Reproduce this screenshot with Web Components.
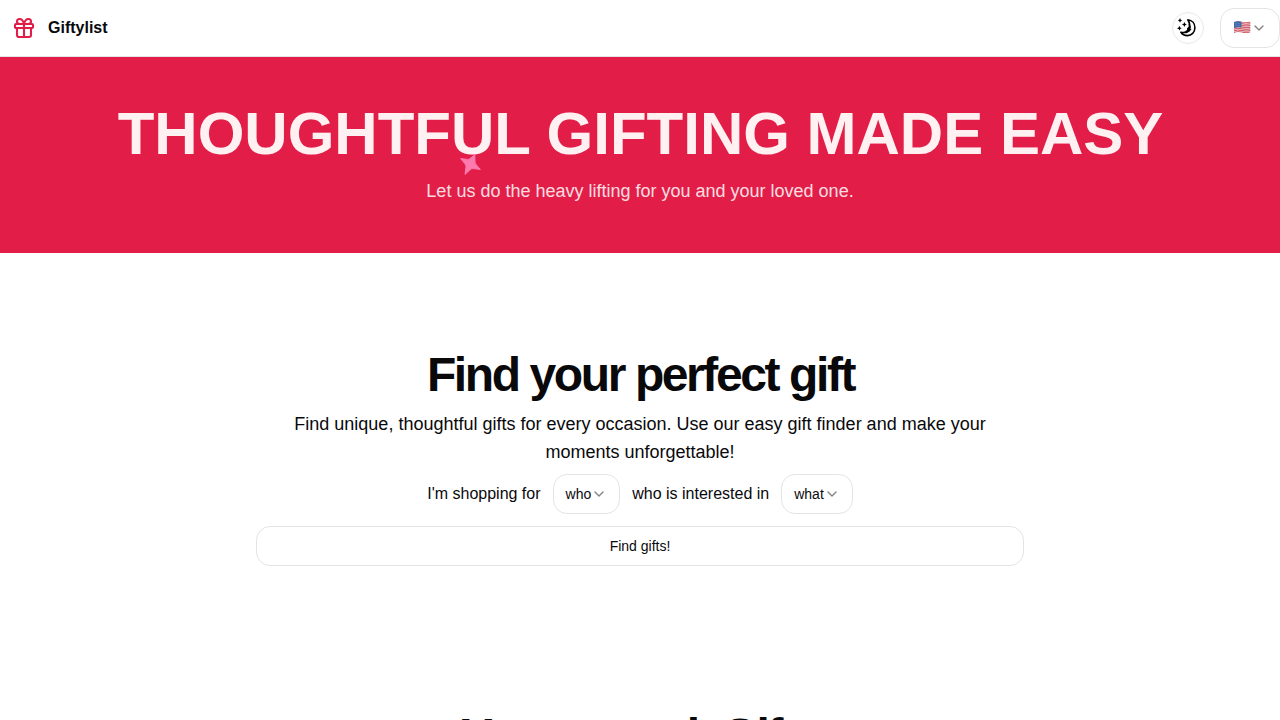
<!DOCTYPE html>
<html lang="en">
<head>
<meta charset="utf-8">
<title>Giftylist</title>
<style>
  body {
    margin: 0;
    height: 720px;
    overflow: hidden;
    background: #fff;
    color: #09090b;
    font-family: "Liberation Sans", Arial, sans-serif;
    font-size: 16px;
    line-height: 24px;
  }
</style>
</head>
<body>
<site-header name="Giftylist"></site-header>
<hero-banner>
  Thoughtful gifting made easy
  <span slot="tagline">Let us do the heavy lifting for you and your loved one.</span>
</hero-banner>
<gift-finder>
  Find your perfect gift
  <span slot="description">Find unique, thoughtful gifts for every occasion. Use our easy gift finder and make your moments unforgettable!</span>
</gift-finder>
<gift-results>Your <em>search</em> Gifts</gift-results>

<script>
class BaseElement extends HTMLElement {
  constructor() {
    super();
    const template = document.createElement('template');
    template.innerHTML = this.constructor.markup;
    this.attachShadow({ mode: 'open' });
    this.shadowRoot.appendChild(template.content.cloneNode(true));
  }
}

class SelectButton extends BaseElement {
  static markup = `
    <style>
      :host { display: block; }
      button {
        display: flex;
        align-items: center;
        box-sizing: border-box;
        height: 40px;
        padding: 0 12px;
        border: 1px solid #e4e4e7;
        border-radius: 14px;
        background: #fff;
        color: inherit;
        font: 14px/20px "Liberation Sans", Arial, sans-serif;
      }
      svg { display: block; opacity: .5; }
    </style>
    <button type="button">
      <slot></slot>
      <svg width="16" height="16" viewBox="0 0 24 24" fill="none" stroke="currentColor" stroke-width="2" stroke-linecap="round" stroke-linejoin="round"><path d="m6 9 6 6 6-6"/></svg>
    </button>
  `;
}

class FlagIcon extends BaseElement {
  static markup = `
    <style>
      :host { display: block; width: 18px; height: 16px; }
      svg { display: block; }
    </style>
    <svg width="18" height="16" viewBox="0 0 18 16">
      <defs>
        <clipPath id="wave"><path d="M1 2Q5 .6 9 1.8T17.3 1.6V12.2Q13 13.8 9 12.6T1 13Z"/></clipPath>
      </defs>
      <g clip-path="url(#wave)">
        <rect width="18" height="16" fill="#e8dade"/>
        <g fill="none" stroke="#d4505c" stroke-width="1">
          <path d="M0 2.5Q5 .8 9 2T18 2M0 4.2Q5 2.5 9 3.7T18 3.7M0 5.9Q5 4.2 9 5.4T18 5.4M0 7.6Q5 5.9 9 7.1T18 7.1M0 9.3Q5 7.6 9 8.8T18 8.8M0 11Q5 9.3 9 10.5T18 10.5M0 12.7Q5 11 9 12.2T18 12.2"/>
        </g>
        <path d="M0 1H8.5V7.6Q5 6.8 0 8.2Z" fill="#3f6aa8"/>
        <path d="M2 3.7H8M2 5.7H8" stroke="#8eaad2" stroke-width=".6" stroke-dasharray=".7 .8"/>
      </g>
    </svg>
  `;
}

class ThemeToggle extends BaseElement {
  static markup = `
    <style>
      :host { display: block; }
      button {
        display: flex;
        align-items: center;
        justify-content: center;
        box-sizing: border-box;
        width: 32px;
        height: 32px;
        padding: 0;
        border: 1px solid #e8e8ea;
        border-radius: 50%;
        background: #fff;
      }
      svg { display: block; margin: -1px 0 0 -2px; }
    </style>
    <button type="button" aria-label="Toggle theme">
      <svg width="22" height="22" viewBox="0 0 22 22">
        <path d="M11.8 2.8C16.2 3.2 18.9 6.6 18.9 10.8C18.9 15.3 15.6 18.6 11.4 18.6C8.6 18.6 6.3 17.3 4.9 15.2C7.6 15.9 10.4 15.2 12 13L11.8 11.7L13.4 10C14 7.3 13.3 4.8 11.8 2.8Z" fill="#fff" stroke="#000" stroke-width="1.6" stroke-linejoin="round"/>
        <path d="M13.6 6.5L15 10.2L14.2 11.5L15.6 12L13.6 14.4L10.6 16.2L7 15.9L10.5 14L12 12.8L11.4 11.5L13 10Z"/>
        <path d="M4 1.1L4.8 2.7L6.3 3.4L4.8 4.1L4 5.7L3.2 4.1L1.7 3.4L3.2 2.7ZM8.4 5.1L9.2 6.8L10.8 7.5L9.2 8.2L8.4 9.9L7.6 8.2L5.9 7.5L7.6 6.8ZM3.4 8.8L4.2 10.5L5.8 11.2L4.2 11.9L3.4 13.5L2.6 11.9L1 11.2L2.6 10.5Z"/>
      </svg>
    </button>
  `;
}

class SiteHeader extends BaseElement {
  static markup = `
    <style>
      :host { display: block; }
      header {
        display: flex;
        align-items: center;
        box-sizing: border-box;
        height: 57px;
        padding-left: 12px;
        border-bottom: 1px solid #e4e4e7;
      }
      .logo { display: block; margin-right: 12px; }
      b { flex: 1; }
      theme-toggle { margin-right: 16px; }
    </style>
    <header>
      <svg class="logo" width="24" height="24" viewBox="0 0 24 24" fill="none" stroke="#e11d48" stroke-width="2.1" stroke-linecap="round" stroke-linejoin="round">
        <rect x="3" y="8" width="18" height="4" rx="1"/>
        <path d="M12 8v13M19 12v7a2 2 0 0 1-2 2H7a2 2 0 0 1-2-2v-7M7.5 8a2.5 2.5 0 0 1 0-5A4.8 8 0 0 1 12 8a4.8 8 0 0 1 4.5-5 2.5 2.5 0 0 1 0 5"/>
      </svg>
      <b></b>
      <theme-toggle></theme-toggle>
      <select-button><flag-icon></flag-icon></select-button>
    </header>
  `;

  connectedCallback() {
    this.shadowRoot.querySelector('b').textContent = this.getAttribute('name');
  }
}

class HeroBanner extends BaseElement {
  static markup = `
    <style>
      :host {
        display: block;
        position: relative;
        padding: 47px 0 48px;
        background: #e11d48;
        color: #fff1f2;
        text-align: center;
      }
      h1 {
        margin: 0 0 13px;
        padding-left: 1px;
        font-size: 60px;
        line-height: 60px;
        text-transform: uppercase;
      }
      p { margin: 0; font-size: 18px; line-height: 28px; opacity: .9; }
      /* sparkle floats over the title */
      svg { position: absolute; left: 459px; top: 96px; }
    </style>
    <h1><slot></slot></h1>
    <p><slot name="tagline"></slot></p>
    <svg width="24" height="24" viewBox="0 0 24 24">
      <path d="M1.6 5.6L8.6 6.4Q10.5 6.4 11.6 5L15.8 1.7L16 8.6Q16 10.6 17.4 12L21.4 16.4L14.4 15.6Q12.4 15.4 11 16.8L6 21.4L7 14.2Q7.2 12.2 5.8 10.6Z" fill="#ff80b5" stroke="#ff80b5" stroke-linejoin="round" opacity=".95"/>
    </svg>
  `;
}

class GiftFinder extends BaseElement {
  static markup = `
    <style>
      :host {
        display: flex;
        flex-direction: column;
        gap: 12px;
        width: 768px;
        margin: 0 auto;
        padding: 98px 0 96px;
        text-align: center;
      }
      h2 {
        margin: 0 0 -1px;
        padding-left: 1px;
        font-size: 48px;
        line-height: 48px;
        letter-spacing: -.05em;
      }
      p { margin: 0 0 -4px; font-size: 18px; line-height: 28px; }
      .choices {
        display: flex;
        align-items: center;
        justify-content: center;
        gap: 12px;
      }
      .find {
        height: 40px;
        border: 1px solid #e4e4e7;
        border-radius: 14px;
        background: #fff;
        color: inherit;
        font: 14px/20px "Liberation Sans", Arial, sans-serif;
      }
    </style>
    <h2><slot></slot></h2>
    <p><slot name="description"></slot></p>
    <div class="choices">
      <span>I'm shopping for</span>
      <select-button>who</select-button>
      <span>who is interested in</span>
      <select-button>what</select-button>
    </div>
    <button class="find" type="button">Find gifts!</button>
  `;
}

class GiftResults extends BaseElement {
  static markup = `
    <style>
      :host { display: block; padding-top: 50px; text-align: center; }
      h2 { margin: 0; font-size: 48px; line-height: 48px; letter-spacing: -.05em; }
      ::slotted(em) { margin: 0 -3px 0 5px; font-style: normal; }
    </style>
    <h2><slot></slot></h2>
  `;
}

customElements.define('select-button', SelectButton);
customElements.define('flag-icon', FlagIcon);
customElements.define('theme-toggle', ThemeToggle);
customElements.define('site-header', SiteHeader);
customElements.define('hero-banner', HeroBanner);
customElements.define('gift-finder', GiftFinder);
customElements.define('gift-results', GiftResults);
</script>
</body>
</html>
